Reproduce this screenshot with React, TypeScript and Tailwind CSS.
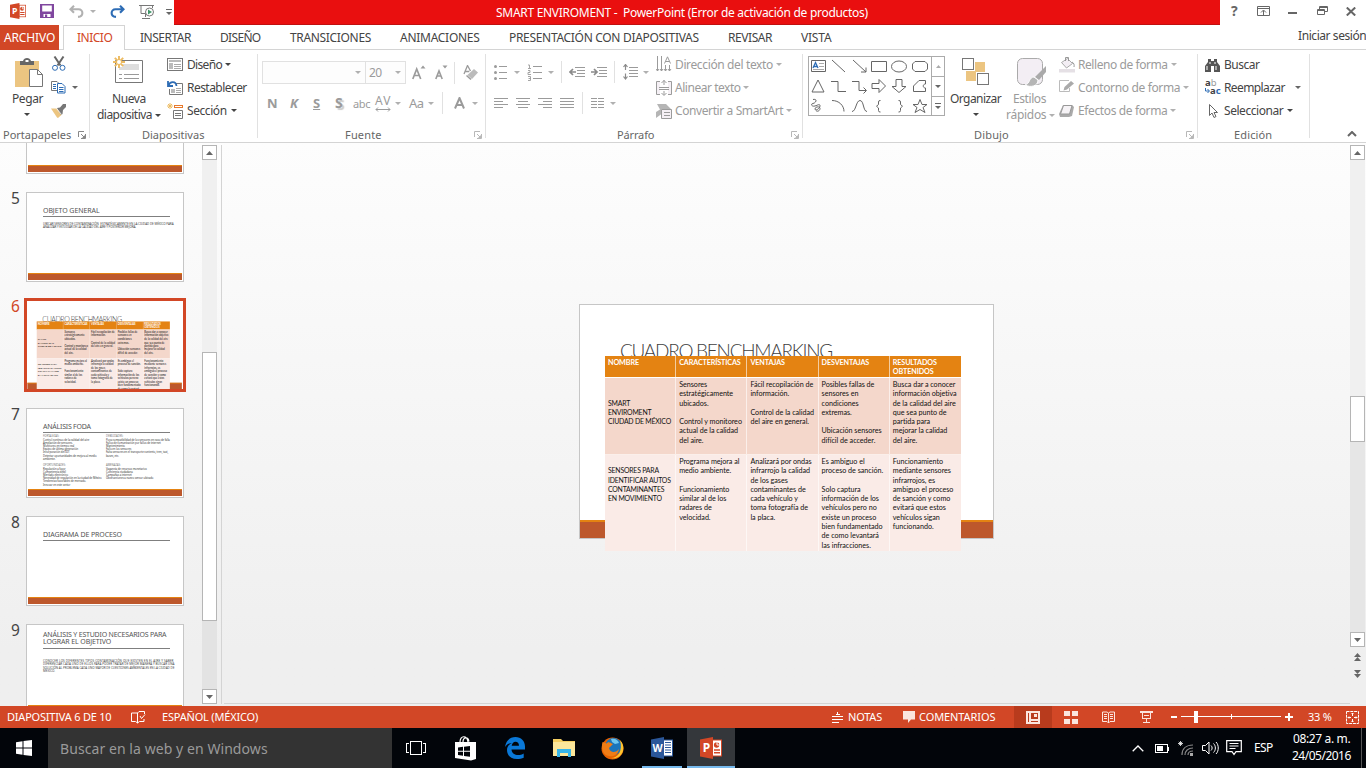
import React, { useLayoutEffect, useRef, useState } from "react";
import type { ReactNode } from "react";

/* Text whose letter spacing is worked out so that it fills the width of its box. */
function Fit({ className = "", children }: { className?: string; children: string }) {
  const box = useRef<HTMLSpanElement>(null);
  const inner = useRef<HTMLSpanElement>(null);
  const [gap, setGap] = useState(0);
  useLayoutEffect(() => {
    if (!box.current || !inner.current) return;
    const diff = box.current.offsetWidth - inner.current.offsetWidth;
    setGap(diff / Math.max(1, children.length));
  }, [children]);
  return (
    <span ref={box} className={`block shrink-0 whitespace-pre ${className}`}>
      <span ref={inner} className="inline-block" style={{ letterSpacing: `${gap}px` }}>
        {children}
      </span>
    </span>
  );
}

function Svg({ w = 16, h = 16, className = "", crisp = false, children }: { w?: number; h?: number; className?: string; crisp?: boolean; children: ReactNode }) {
  return (
    <svg width={w} height={h} viewBox={`0 0 ${w} ${h}`} fill="none" className={`block shrink-0 ${className}`} shapeRendering={crisp ? "crispEdges" : "auto"}>
      {children}
    </svg>
  );
}

function Caret({ className = "text-[#777]" }: { className?: string }) {
  return (
    <Svg w={6} h={3} className={className}>
      <path d="M0 0h6L3 3z" fill="currentColor" />
    </Svg>
  );
}

function Launcher({ className = "" }: { className?: string }) {
  return (
    <Svg w={8} h={8} className={className}>
      <path d="M.5 6V.5H6M3 3l3 3M7.500 3v4.500H3" stroke="currentColor" />
      <path d="M4 7h3V4z" fill="currentColor" />
    </Svg>
  );
}

const Sep = () => <div className="mt-[4px] h-[84px] w-px shrink-0 bg-[#e1e1e1]" />;
const SmallSep = ({ className = "" }: { className?: string }) => <div className={`h-[22px] w-px shrink-0 bg-[#e1e1e1] ${className}`} />;

function Logo({ size, letter, color, word }: { size: number; letter: string; color: string; word?: boolean }) {
  return (
    <svg width={size} height={size} viewBox="0 0 22 22" className="block shrink-0">
      <rect x="12.5" y="3" width="9" height="16" fill="#fff" stroke={color} />
      {word ? (
        <path d="M14 5.5h6M14 8h6M14 10.500h6M14 13h6M14 15.500h6" stroke={color} strokeWidth="1.2" />
      ) : (
        <>
          <circle cx="16.6" cy="8" r="2.7" fill={color} />
          <path d="M17 5v3h3" stroke="#fff" fill="none" />
          <path d="M14 13h6M14 15.800h6" stroke={color} strokeWidth="1.4" />
        </>
      )}
      <path d="M0 2.500L13 0v22L0 19.500z" fill={color} />
      <text x="6.5" y="15.2" textAnchor="middle" fontSize={word ? "10.5" : "12"} fontWeight="700" fontFamily="Noto Sans, sans-serif" fill="#fff">
        {letter}
      </text>
    </svg>
  );
}

/* ---------- title bar and tabs ---------- */

function TitleBar() {
  return (
    <div className="flex h-[25px] bg-white">
      <div className="flex w-[174px] shrink-0 items-center pb-[3px] pl-[10px]">
        <Logo size={16} letter="P" color="#d24726" />
        <Svg w={14} h={14} className="ml-[14px]">
          <path d="M0 0h14v14H0z" fill="#80479f" />
          <path d="M2.200 1.500h9.600v6H2.200zM3.500 10h7v3h-7z" fill="#fff" />
          <path d="M5 10.500h2.200V13H5z" fill="#80479f" />
        </Svg>
        <Svg w={15} h={13} className="ml-[15px]">
          <path d="M5 .8L1.500 4.300 5 7.800M2 4.300h7.500c5 0 5.500 7-.5 7.600" stroke="#b1b1b1" strokeWidth="2.1" />
        </Svg>
        <Caret className="ml-[6px] text-[#b1b1b1]" />
        <Svg w={15} h={13} className="ml-[14px]">
          <path d="M10 .8l3.500 3.500L10 7.800M13 4.300H5.500C.5 4.300 0 11.300 6 11.900" stroke="#2d6cb5" strokeWidth="2.1" />
        </Svg>
        <Svg w={16} h={16} className="ml-[14px] mt-[2px]">
          <path d="M0 1.500h15M2 2v7.500h5M6.500 10v3M3 14.500h8M13.500 2v2" stroke="#777" />
          <circle cx="10.5" cy="8" r="4" stroke="#777" fill="#fff" />
          <path d="M9 5.500v5l4-2.500z" fill="#3f9668" />
        </Svg>
        <Svg w={6} h={6} className="ml-[11px] mt-[2px]">
          <path d="M0 .5h6" stroke="#666" />
          <path d="M0 3h6L3 6z" fill="#666" />
        </Svg>
      </div>
      <div className="flex w-[1046px] shrink-0 items-center border-b border-[#c01010] bg-[#e90f0f] pl-[322px] pt-[2px] text-white">
        <Fit className="w-[372px] text-[12px]">{"SMART ENVIROMENT -  PowerPoint (Error de activación de productos)"}</Fit>
      </div>
      <div className="flex w-[146px] shrink-0 items-center pb-[3px] pl-[11px] text-[#666]">
        <span className="w-[8px] text-[14px] font-bold leading-none">?</span>
        <Svg w={13} h={10} className="ml-[18px]">
          <path d="M.5.5h12v9H.5zM1 2.500h11M6.500 9V4.500M4 6.500L6.500 4 9 6.500" stroke="#666" />
        </Svg>
        <Svg w={9} h={10} className="ml-[18px]" crisp>
          <path d="M0 6h9v2H0z" fill="#666" />
        </Svg>
        <Svg w={11} h={10} className="ml-[20px]">
          <path d="M2.500 3V.500h8v5H8M.5 3.500h7v5h-7zM.5 4.500h7M2.500 1.500h8" stroke="#666" />
        </Svg>
        <Svg w={10} h={9} className="ml-[18px]">
          <path d="M.8.5l8.400 8M9.200.5L.8 8.500" stroke="#666" strokeWidth="2" />
        </Svg>
      </div>
    </div>
  );
}

function Tabs() {
  return (
    <div className="flex h-[25px] items-stretch bg-white text-[12px] text-[#444]">
      <div className="flex w-[59px] shrink-0 items-center bg-[#d24726] pl-[4px] pt-px text-white">
        <Fit className="w-[51px]">ARCHIVO</Fit>
      </div>
      <div className="w-[4px] shrink-0 border-b border-[#d4d4d4]" />
      <div className="flex w-[62px] shrink-0 items-center border-x border-t border-[#d4d4d4] pl-[13px] text-[#d24726]">
        <Fit className="w-[35px]">INICIO</Fit>
      </div>
      <div className="flex grow items-center border-b border-[#d4d4d4] pl-[15px] pt-[2px]">
        <Fit className="w-[51px]">INSERTAR</Fit>
        <Fit className="ml-[29px] w-[41px]">DISEÑO</Fit>
        <Fit className="ml-[29px] w-[81px]">TRANSICIONES</Fit>
        <Fit className="ml-[29px] w-[80px]">ANIMACIONES</Fit>
        <Fit className="ml-[29px] w-[190px]">PRESENTACIÓN CON DIAPOSITIVAS</Fit>
        <Fit className="ml-[29px] w-[44px]">REVISAR</Fit>
        <Fit className="ml-[29px] w-[30px]">VISTA</Fit>
        <Fit className="mb-[5px] ml-[467px] w-[68px]">Iniciar sesión</Fit>
      </div>
    </div>
  );
}

/* ---------- ribbon ---------- */

function Group({ width, label, launcher, children }: { width: string; label: ReactNode; launcher?: ReactNode; children: ReactNode }) {
  return (
    <div className={`flex shrink-0 flex-col ${width}`}>
      <div className="flex h-[76px] shrink-0">{children}</div>
      <div className="flex h-[16px] shrink-0 items-center pt-[1px] text-[11px] leading-[15px] text-[#666]">
        {label}
        {launcher}
      </div>
    </div>
  );
}

function Clipboard() {
  return (
    <Group width="w-[89px]" label={<Fit className="ml-[3px] w-[68px]">Portapapeles</Fit>} launcher={<Launcher className="ml-[7px] text-[#888]" />}>
      <div className="flex w-[50px] shrink-0 flex-col pl-[12px] text-[12px] text-[#444]">
        <Svg w={30} h={30} className="ml-[3px] mt-[8px]">
          <path d="M0 3h24v26H0z" fill="#ecc581" />
          <path d="M5 3h3c1-4 7-4 8 0h3v4H5z" fill="#666" />
          <path d="M10.500 2h3v2h-3z" fill="#fff" />
          <path d="M14.500 11.500h8l5 5v12h-13z" fill="#fff" stroke="#777" />
          <path d="M22.500 11.500v5h5" stroke="#777" />
        </Svg>
        <Fit className="mt-[2px] w-[31px]">Pegar</Fit>
        <Caret className="ml-[12px] mt-[5px]" />
      </div>
      <div className="flex flex-col pt-[6px]">
        <Svg w={16} h={16} className="ml-[1px]">
          <path d="M3.500.5l6 9M12.500.5l-6 9" stroke="#666" strokeWidth="2" />
          <circle cx="4" cy="11.8" r="2.5" stroke="#2d6cb5" />
          <circle cx="11.5" cy="11.8" r="2.5" stroke="#2d6cb5" />
        </Svg>
        <div className="mt-[7px] flex items-center">
          <Svg className="ml-[1px]">
            <path d="M.5 2.500h5.500l2 2v7H.5z" fill="#fff" stroke="#777" />
            <path d="M6.500 4.500H11l3 3v6.500H6.500z" fill="#fff" stroke="#2d6cb5" />
            <path d="M2 5.500h3M2 7.500h3M2 9.500h3M8 8.500h4.500M8 10.500h4.500M8 12.500h4.500" stroke="#2d6cb5" />
          </Svg>
          <Caret className="ml-[5px] text-[#666]" />
        </div>
        <Svg className="ml-[1px] mt-[8px]">
          <path d="M0 5.500l6 0 5 6-4 3.500-1-.5z" fill="#ecc581" />
          <path d="M6 5l3-.5 3-3.500h3v3l-3 3-.5 4-1.500 1z" fill="#777" />
          <path d="M5.500 5.500l5 6" stroke="#fff" strokeWidth=".8" />
        </Svg>
      </div>
    </Group>
  );
}

function Slides() {
  return (
    <Group width="w-[167px]" label={<Fit className="ml-[52px] w-[62px]">Diapositivas</Fit>}>
      <div className="w-[76px] shrink-0 pl-[7px] text-[12px] text-[#444]">
        <Svg w={31} h={29} className="ml-[16px] mt-[6px]">
          <path d="M2.500 4.500h27v22h-27z" fill="#fff" stroke="#777" />
          <path d="M10 8h16v6H6v-3h4z" fill="#ddd" />
          <path d="M6 18.500h3M11 18.500h15M6 22.500h3M11 22.500h15" stroke="#999" />
          <path d="M6 0v12M0 6h12M1.800 1.800l8.400 8.400M10.200 1.800l-8.400 8.400" stroke="#ecbb62" strokeWidth="1.9" />
          <circle cx="6" cy="6" r="2" fill="#fff" />
        </Svg>
        <Fit className="ml-[15px] mt-[5px] w-[34px]">Nueva</Fit>
        <div className="-mt-[2px] flex items-center">
          <Fit className="w-[55px]">diapositiva</Fit>
          <Caret className="ml-[3px] mt-[1px]" />
        </div>
      </div>
      <div className="flex flex-col pt-[3px] text-[12px] text-[#444]">
        <div className="flex h-[23px] items-center">
          <Svg className="ml-[1px]" crisp>
            <path d="M.5 1.500h15v12H.5z" stroke="#777" />
            <path d="M2 3h12v2H2zM2 6h4v6H2z" fill="#bbb" />
            <path d="M7 7.500h7M7 9.500h7M7 11.500h7" stroke="#aaa" />
          </Svg>
          <Fit className="ml-[4px] w-[35px]">Diseño</Fit>
          <Caret className="ml-[3px]" />
        </div>
        <div className="flex h-[23px] items-center">
          <Svg className="ml-[1px]">
            <path d="M9 3.500h6.500v11H2.500V9" stroke="#777" />
            <path d="M4 9h4v4H4z" fill="#bbb" />
            <path d="M9 8.500h5M9 10.500h5M9 12.500h5" stroke="#aaa" />
            <path d="M1 1v5h5M1.500 5.500C3 1 9 1 9.500 6" stroke="#2d6cb5" strokeWidth="1.8" />
          </Svg>
          <Fit className="ml-[4px] w-[60px]">Restablecer</Fit>
        </div>
        <div className="flex h-[23px] items-center">
          <Svg className="ml-[1px]">
            <path d="M3 0v6M0 3h6M1 1l4 4M5 1L1 5" stroke="#ecbb62" />
            <path d="M7 2h9v3H7z" fill="#e8792b" />
            <path d="M8 3h7v1H8z" fill="#fff" />
            <path d="M6.500 7.500h9v8h-9zM8 10.500h6M8 12.500h6" stroke="#777" />
          </Svg>
          <Fit className="ml-[4px] w-[40px]">Sección</Fit>
          <Caret className="ml-[4px]" />
        </div>
      </div>
    </Group>
  );
}

function FontGroup() {
  return (
    <Group width="w-[227px]" label={<Fit className="ml-[87px] w-[37px]">Fuente</Fit>} launcher={<Launcher className="ml-[92px] text-[#b8b8b8]" />}>
      <div className="flex flex-col text-[#9b9b9b]">
        <div className="mt-[11px] flex h-[23px] items-center">
          <div className="ml-[4px] flex h-[23px] w-[104px] items-center justify-end border border-[#e1e1e1] bg-[#fdfdfd] pr-[4px]">
            <Caret className="text-[#b0b0b0]" />
          </div>
          <div className="-ml-px flex h-[23px] w-[41px] items-center border border-[#e1e1e1] bg-[#fdfdfd] pl-[3px] text-[12px]">
            <Fit className="w-[13px]">20</Fit>
            <Caret className="ml-[13px] text-[#b0b0b0]" />
          </div>
          <Svg w={14} h={15} className="ml-[6px]">
            <path d="M.8 14L4.700 4l4 10M2.300 10.500h5" stroke="#9b9b9b" strokeWidth="1.7" />
            <path d="M8.500 3.500h5L11 .5z" fill="#9b9b9b" />
          </Svg>
          <Svg w={13} h={15} className="ml-[9px]">
            <path d="M.8 14l3.200-8 3.200 8M2 11h4.200" stroke="#9b9b9b" strokeWidth="1.6" />
            <path d="M7.500.5h5l-2.500 3z" fill="#9b9b9b" />
          </Svg>
          <SmallSep className="ml-[6px]" />
          <Svg className="ml-[8px]">
            <path d="M1 9L4.500.500 7.500 6M2.300 6.500h4" stroke="#9b9b9b" strokeWidth="1.3" />
            <path d="M11 4l4 3.500-6 6.500-4.500-4z" fill="#bbb" />
            <path d="M3.500 10.500l4.500 4" stroke="#9b9b9b" strokeWidth="1.5" />
          </Svg>
        </div>
        <div className="mt-[8px] flex h-[22px] items-center text-[14px] leading-none">
          <span className="ml-[9px] w-[11px] text-[13px] font-bold">N</span>
          <span className="ml-[12px] w-[9px] text-[13px] font-bold italic">K</span>
          <span className="ml-[14px] w-[9px] text-[13px] font-bold underline">S</span>
          <span className="ml-[13px] w-[11px] text-[14px] font-bold [text-shadow:2px_2px_1px_#ccc]">S</span>
          <Fit className="ml-[7px] w-[17px] text-[11px] line-through">abc</Fit>
          <div className="ml-[5px] flex w-[18px] shrink-0 flex-col">
            <Fit className="w-[16px] text-[12px]">AV</Fit>
            <Svg w={17} h={5}>
              <path d="M1 2.500h14M3 .5l-2 2 2 2M13 .5l2 2-2 2" stroke="#9b9b9b" />
            </Svg>
          </div>
          <Caret className="ml-[2px] text-[#b0b0b0]" />
          <Fit className="ml-[8px] w-[15px] text-[13px]">Aa</Fit>
          <Caret className="ml-[4px] text-[#b0b0b0]" />
          <SmallSep className="ml-[8px]" />
          <Svg w={11} h={12} className="ml-[11px]">
            <path d="M1 11.500L5.500 1 10 11.500M2.800 8h5.500" stroke="#9b9b9b" strokeWidth="2" />
          </Svg>
          <Caret className="ml-[7px] text-[#b0b0b0]" />
        </div>
      </div>
    </Group>
  );
}

function AlignIcon({ d, className }: { d: string; className: string }) {
  return (
    <Svg w={14} h={12} crisp className={className}>
      <path d={d} stroke="#9b9b9b" />
    </Svg>
  );
}

function Paragraph() {
  const light = "text-[#b0b0b0]";
  return (
    <Group width="w-[316px]" label={<Fit className="ml-[131px] w-[37px]">Párrafo</Fit>} launcher={<Launcher className="ml-[137px] text-[#b8b8b8]" />}>
      <div className="w-[170px] shrink-0 pl-[8px]">
        <div className="mt-[11px] flex h-[22px] items-center">
          <Svg w={14} h={16}>
            <path d="M5 2.500h8M5 8.500h8M5 14.500h8" stroke="#9b9b9b" />
            <circle cx="1.5" cy="2.5" r="1.5" fill="#9b9b9b" />
            <circle cx="1.5" cy="8.5" r="1.5" fill="#9b9b9b" />
            <circle cx="1.5" cy="14.5" r="1.5" fill="#9b9b9b" />
          </Svg>
          <Caret className={`ml-[6px] ${light}`} />
          <Svg w={15} h={17} className="ml-[7px]">
            <path d="M6 2.500h9M6 8.500h9M6 14.500h9" stroke="#9b9b9b" />
            <path d="M1 1h1.500v3M1 4.500h3M1 6.500h2v2H1v2h3M1 12.500h2.500v4H1M1.500 14.500h2" stroke="#9b9b9b" strokeWidth=".9" />
          </Svg>
          <Caret className={`ml-[6px] ${light}`} />
          <SmallSep className="ml-[7px]" />
          <Svg w={16} h={13} className="ml-[7px]">
            <path d="M6 1.500h10M8 4.500h8M8 7.500h8M6 10.500h10" stroke="#9b9b9b" />
            <path d="M7 6H1M4 3L1 6l3 3" stroke="#8b8b8b" strokeWidth="1.7" />
          </Svg>
          <Svg w={16} h={13} className="ml-[6px]">
            <path d="M6 1.500h10M8 4.500h8M8 7.500h8M6 10.500h10" stroke="#9b9b9b" />
            <path d="M0 6h6M3 3l3 3-3 3" stroke="#8b8b8b" strokeWidth="1.7" />
          </Svg>
          <SmallSep className="ml-[7px]" />
          <Svg w={15} h={16} className="ml-[8px]">
            <path d="M6 3.500h9M6 6.500h9M6 9.500h9M6 12.500h9" stroke="#9b9b9b" />
            <path d="M2.500 1v5M.5 3l2-2.500 2 2.500M2.500 9.500v5.500M.5 12.500l2 2.500 2-2.500" stroke="#8b8b8b" strokeWidth="1.2" />
          </Svg>
          <Caret className={`ml-[5px] ${light}`} />
        </div>
        <div className="mt-[9px] flex h-[22px] items-center">
          <AlignIcon className="" d="M0 1.500h14M0 4.500h9M0 7.500h14M0 10.500h9" />
          <AlignIcon className="ml-[8px]" d="M0 1.500h14M2 4.500h10M0 7.500h14M2 10.500h10" />
          <AlignIcon className="ml-[8px]" d="M0 1.500h14M5 4.500h9M0 7.500h14M5 10.500h9" />
          <AlignIcon className="ml-[8px]" d="M0 1.500h14M0 4.500h14M0 7.500h14M0 10.500h14" />
          <SmallSep className="ml-[8px]" />
          <AlignIcon className="ml-[8px]" d="M0 1.500h6M0 4.500h6M0 7.500h6M0 10.500h6M7 1.500h6M7 4.500h6M7 7.500h6M7 10.500h6" />
          <Caret className={`ml-[5px] ${light}`} />
        </div>
      </div>
      <div className="flex flex-col pt-[3px] text-[12px] text-[#9b9b9b]">
        <div className="flex h-[23px] items-center">
          <Svg w={16} h={17}>
            <path d="M1.500 0v15M5.500 0v15M9.500 9v6M13.500 9v6M0 13l1.500 2L3 13M4 13l1.500 2L7 13M8 13l1.500 2 1.500-2M12 13l1.500 2 1.500-2M8.500 7.500L11.500.8l3 6.700M9.500 5.500h4" stroke="#9b9b9b" />
          </Svg>
          <Fit className="ml-[3px] w-[98px]">Dirección del texto</Fit>
          <Caret className={`ml-[3px] ${light}`} />
        </div>
        <div className="flex h-[23px] items-center">
          <Svg>
            <path d="M4 1.500H.5v13H4M12 1.500h3.500v13H12" fill="#f5f0f5" stroke="#9b9b9b" />
            <path d="M3 7.500h10M3 9.500h10M8 0v5M5.500 3L8 .5 10.500 3M8 11v4M5.500 13L8 15.500l2.500-2.500" stroke="#9b9b9b" />
          </Svg>
          <Fit className="ml-[3px] w-[66px]">Alinear texto</Fit>
          <Caret className={`ml-[2px] ${light}`} />
        </div>
        <div className="flex h-[23px] items-center">
          <Svg>
            <path d="M1 1h9l5 5H5.500v5L0 15V9l4-2.500z" fill="#b5b5b5" />
            <path d="M5.500 6.500h10v9h-10z" fill="#f5f0f5" stroke="#9b9b9b" />
            <path d="M8 9.500h6M8 12.500h6" stroke="#9b9b9b" />
          </Svg>
          <Fit className="ml-[3px] w-[108px]">Convertir a SmartArt</Fit>
          <Caret className={`ml-[3px] ${light}`} />
        </div>
      </div>
    </Group>
  );
}

const SHAPES: string[] = [
  "",
  "M3 3l13 12",
  "M3 3l13 12M16 10.500V15h-5",
  "M1.500 4.500h15v10h-15z",
  "M1.500 9.500a7.500 5.500 0 1 0 15 0a7.500 5.500 0 1 0-15 0",
  "M4 4.500h10l2.500 2.500v5L14 14.500H4L1.500 12V7z",
  "M9 4l6 12H3z",
  "M2 5.500h7v10h8",
  "M2 5.500h7v9H16M13.500 11.500l3 3-3 3",
  "M2 7.500h7V3.500l6.500 6.500-6.500 6.500v-4H2z",
  "M6 3.500h6v7h4L9 16.500 2 10.500h4z",
  "M8 4.500L2.500 10v5.500h12V12c-3 0-3-4 0-4V4.500z",
  "M4 3.500c5-1 3 3.500 0 4s-1 3.500 2 2.500 5-2.500 5 0-5 5.500-5 3 5-3 5-.5-3 3.500-4 2",
  "M3 4.500c7 0 12 5 12 11",
  "M2 15.500c4 0 4-11 8-11s3 11 7 11",
  "M10.500 4.500H10Q8.500 4.500 8.500 6V8.500L6.500 10.200L8.500 12V14.500Q8.500 16 10 16H10.500",
  "M8.500 4.500H9Q10.500 4.500 10.500 6V8.500L12.500 10.200L10.500 12V14.500Q10.500 16 9 16H8.500",
  "M9 3.500l2 5h5l-4 3 2 5-5-3-5 3 2-5-4-3h5z",
];

function Drawing() {
  const light = "text-[#b0b0b0]";
  return (
    <Group width="w-[394px]" label={<Fit className="ml-[171px] w-[35px]">Dibujo</Fit>} launcher={<Launcher className="ml-[177px] text-[#b8b8b8]" />}>
      <div className="ml-[5px] mt-[6px] flex h-[60px] w-[137px] shrink-0 border border-[#ababab] bg-white">
        <div className="grid h-[58px] w-[122px] shrink-0 grid-cols-6 content-start">
          {SHAPES.map((d, i) => (
            <Svg key={i} w={20} h={20} className="-mt-[0.3px]">
              {i === 0 ? (
                <>
                  <path d="M2.500 3.500h14v11h-14z" stroke="#666" />
                  <path d="M4 11L6.500 5.500 9 11M5 9.500h3" stroke="#2d6cb5" strokeWidth="1.3" />
                  <path d="M10 6.500h5M10 9.500h5M4 12.500h11" stroke="#aaa" />
                </>
              ) : (
                <path d={d} stroke="#666" />
              )}
            </Svg>
          ))}
        </div>
        <div className="flex w-[14px] flex-col border-l border-[#ababab]">
          <div className="flex h-[20px] items-center justify-center border-b border-[#ababab]">
            <Svg w={5} h={3}>
              <path d="M0 3h5L2.500 0z" fill="#ababab" />
            </Svg>
          </div>
          <div className="flex h-[20px] items-center justify-center border-b border-[#ababab]">
            <Caret className="text-[#666]" />
          </div>
          <div className="flex h-[18px] items-center justify-center">
            <Svg w={6} h={6}>
              <path d="M0 .5h6" stroke="#666" />
              <path d="M0 3h6L3 6z" fill="#666" />
            </Svg>
          </div>
        </div>
      </div>
      <div className="ml-[5px] w-[54px] shrink-0 text-[12px] text-[#444]">
        <Svg w={28} h={28} className="ml-[12px] mt-[8px]" crisp>
          <path d="M13 4h10v10H13zM4 13h10v10H4z" fill="#ecc581" />
          <path d="M.5.500h11v11H.500zM15.500 15.500h11v11h-11z" fill="#fff" stroke="#777" />
        </Svg>
        <Fit className="mt-[4px] w-[51px]">Organizar</Fit>
        <Caret className="ml-[23px] mt-[5px]" />
      </div>
      <div className="ml-[2px] w-[53px] shrink-0 text-[12px] text-[#9b9b9b]">
        <Svg w={31} h={30} className="ml-[11px] mt-[8px]">
          <rect x=".5" y=".5" width="25" height="26" rx="5" fill="#f3eef4" stroke="#aaa" />
          <path d="M29 8v6l-7 8-4-3z" fill="#aaa" />
          <path d="M17 19c-5 0-4 7-9 8 6 3 13 1 13-5z" fill="#b5b5b5" stroke="#fff" />
        </Svg>
        <Fit className="ml-[7px] mt-[2px] w-[33px]">Estilos</Fit>
        <div className="-mt-[2px] flex items-center">
          <Fit className="w-[40px]">rápidos</Fit>
          <Caret className={`ml-[3px] mt-[1px] ${light}`} />
        </div>
      </div>
      <div className="flex flex-col pt-[3px] text-[12px] text-[#9b9b9b]">
        <div className="flex h-[23px] items-center">
          <Svg w={17} h={17}>
            <path d="M2.500 6.500l6-4 5 5-6 4.500z" fill="#f3eef4" stroke="#aaa" />
            <path d="M6.500 5V1.500h3V5M13 6c2 1 2.500 3 2 5" stroke="#999" />
            <path d="M0 13h16v3.500H0z" fill="#e5e0e5" />
          </Svg>
          <Fit className="ml-[2px] w-[90px]">Relleno de forma</Fit>
          <Caret className={`ml-[3px] ${light}`} />
        </div>
        <div className="flex h-[23px] items-center">
          <Svg w={17}>
            <path d="M10 .5H.5v11h10V8" stroke="#bbb" />
            <path d="M12 1l3 2.500-7 6-3.500 1L5.500 7z" fill="#aaa" />
          </Svg>
          <Fit className="ml-[2px] w-[102px]">Contorno de forma</Fit>
          <Caret className={`ml-[3px] ${light}`} />
        </div>
        <div className="flex h-[23px] items-center">
          <Svg w={17}>
            <path d="M4 2h9l2 2-2 9-3 1H1l-1-3z" fill="#aaa" />
            <path d="M4.500 2.500h8.500l-2.500 8.500H1.500z" fill="#f6f3f6" stroke="#999" />
          </Svg>
          <Fit className="ml-[2px] w-[89px]">Efectos de forma</Fit>
          <Caret className={`ml-[3px] ${light}`} />
        </div>
      </div>
    </Group>
  );
}

function Editing() {
  return (
    <Group width="w-[111px]" label={<Fit className="ml-[36px] w-[38px]">Edición</Fit>}>
      <div className="flex flex-col pl-[7px] pt-[3px] text-[12px] text-[#444]">
        <div className="flex h-[23px] items-center">
          <Svg w={15} h={14}>
            <path d="M3 1h3v2h3V1h3v3l3 4v6H9V8H6v6H0V8l3-4z" fill="#555" />
            <path d="M2 8v4M11 8v4M5 4v2M10 4v2" stroke="#fff" />
          </Svg>
          <Fit className="ml-[4px] w-[35px]">Buscar</Fit>
        </div>
        <div className="flex h-[23px] items-center">
          <div className="flex w-[16px] shrink-0 flex-col text-[9.5px] font-bold leading-[8px]">
            <div className="flex">
              <span>a</span>
              <span className="font-normal text-[#999]">b</span>
            </div>
            <div className="flex items-center pb-[2px]">
              <Svg w={5} h={5}>
                <path d="M.5 0v3H4M2.500 1L4.500 3l-2 2" stroke="#2d6cb5" />
              </Svg>
              <span>a</span>
              <span className="text-[#2d6cb5]">c</span>
            </div>
          </div>
          <Fit className="ml-[3px] w-[61px]">Reemplazar</Fit>
          <Caret className="ml-[10px] text-[#666]" />
        </div>
        <div className="flex h-[23px] items-center">
          <Svg w={16} h={16}>
            <path d="M4.500 1.500v11L7 10l2 4.500 2-1L9 9.500h3.500z" fill="#fff" stroke="#666" />
          </Svg>
          <Fit className="ml-[3px] w-[59px]">Seleccionar</Fit>
          <Caret className="ml-[4px]" />
        </div>
      </div>
    </Group>
  );
}

function Ribbon() {
  return (
    <div className="flex h-[93px] border-b border-[#d4d4d4] bg-white">
      <Clipboard />
      <Sep />
      <Slides />
      <Sep />
      <FontGroup />
      <Sep />
      <Paragraph />
      <Sep />
      <Drawing />
      <Sep />
      <Editing />
      <Sep />
      <Svg w={10} h={6} className="ml-[37px] mt-[81px]">
        <path d="M1 5l4-4 4 4" stroke="#666" strokeWidth="2" />
      </Svg>
    </div>
  );
}

/* ---------- slides ---------- */

const HEAD = [["NOMBRE"], ["CARACTERÍSTICAS"], ["VENTAJAS"], ["DESVENTAJAS"], ["RESULTADOS", "OBTENIDOS"]];
const ROWS = [
  [
    ["", "", "SMART", "ENVIROMENT", "CIUDAD DE MÉXICO"],
    ["Sensores", "estratégicamente", "ubicados.", "", "Control y monitoreo", "actual de la calidad", "del aire."],
    ["Fácil recopilación de", "información.", "", "Control de la calidad", "del aire en general."],
    ["Posibles fallas de", "sensores en", "condiciones", "extremas.", "", "Ubicación sensores", "difícil de acceder."],
    ["Busca dar a conocer", "información objetiva", "de la calidad del aire", "que sea punto de", "partida para", "mejorar la calidad", "del aire."],
  ],
  [
    ["", "SENSORES PARA", "IDENTIFICAR AUTOS", "CONTAMINANTES", "EN MOVIMIENTO"],
    ["Programa mejora al", "medio ambiente.", "", "Funcionamiento", "similar al de los", "radares de", "velocidad."],
    ["Analizará por ondas", "infrarrojo la calidad", "de los gases", "contaminantes de", "cada vehículo y", "toma fotografía de", "la placa."],
    ["Es ambiguo el", "proceso de sanción.", "", "Solo captura", "información de los", "vehículos pero no", "existe un proceso", "bien fundamentado", "de como levantará", "las infracciones."],
    ["Funcionamiento", "mediante sensores", "infrarrojos, es", "ambiguo el proceso", "de sanción y como", "evitará que estos", "vehículos sigan", "funcionando."],
  ],
];

function Cell({ lines, className = "" }: { lines: string[]; className?: string }) {
  return (
    <div className={`border-r border-white/60 pl-[3px] pt-[2px] last:border-r-0 ${className}`}>
      {lines.map((l, i) => (
        <div key={i} className="h-[9.3px] whitespace-nowrap">
          {l}
        </div>
      ))}
    </div>
  );
}

const UPPER = "pt-[2.7px] text-[6.9px] tracking-[-0.2px]";

function BenchmarkSlide() {
  return (
    <div className="relative flex h-[235px] w-[415px] flex-col justify-between font-['Lato',sans-serif]">
      <Fit className="ml-[41px] mt-[33px] w-[212px] text-[19px] font-light leading-[27px] text-[#404040]">CUADRO BENCHMARKING</Fit>
      <div className="mx-px mb-px h-[18px] border-t-2 border-[#e48312] bg-[#bd582c]" />
      <div className="absolute left-[26px] top-[52px] w-[356px] text-[7.2px] leading-[9.3px] tracking-[-0.03px] text-[#111]">
        <div className="grid h-[22px] grid-cols-5 border-b border-white bg-[#e48312] font-bold text-white">
          {HEAD.map((c, i) => (
            <Cell key={i} lines={c} className="tracking-[-0.12px]" />
          ))}
        </div>
        <div className="grid h-[77px] grid-cols-5 border-b border-white/60 bg-[#f4d7cb]">
          {ROWS[0].map((c, i) => (
            <Cell key={i} lines={c} className={i === 0 ? UPPER : ""} />
          ))}
        </div>
        <div className="grid h-[96px] grid-cols-5 bg-[#faebe7]">
          {ROWS[1].map((c, i) => (
            <Cell key={i} lines={c} className={i === 0 ? UPPER : ""} />
          ))}
        </div>
      </div>
    </div>
  );
}

function Thumb({ n, selected, className = "", footer = true, children }: { n: string; selected?: boolean; className?: string; footer?: boolean; children?: ReactNode }) {
  return (
    <div className={`mb-[18px] flex h-[90px] shrink-0 ${className}`}>
      <span className={`-mt-[4px] w-[26px] shrink-0 pl-[11px] text-[15.5px] leading-[20px] ${selected ? "text-[#d24726]" : "text-[#444]"}`}>{n}</span>
      <div
        className={`flex h-[90px] w-[158px] flex-col justify-between overflow-hidden border bg-white ${
          selected ? "border-[#d24726] outline-2 outline-[#d24726]" : "border-[#c6c6c6]"
        }`}
      >
        <div className="min-h-0">{children}</div>
        {footer && <div className="mx-px mb-px h-[7px] shrink-0 border-t border-[#e48312] bg-[#bd582c]" />}
      </div>
    </div>
  );
}

const Rule = ({ className = "" }: { className?: string }) => <div className={`ml-[16px] h-px w-[127px] bg-[#7f7f7f] ${className}`} />;

const SWOT: string[][][] = [
  [
    ["FORTALEZAS:", "Control continuo de la calidad del aire", "Ampliación de sensores.", "Monitoreo en tiempo real", "Equipo de última generación", "Incorporación del IOT", "Detectar oportunidades de mejora al medio", "ambiente."],
    ["DEBILIDADES:", "Poca compatibilidad de los sensores en caso de falla", "Fallos de comunicación por fallos de internet", "Mantenimiento", "Fallo en los sensores", "Falta sensores en el transporte contento, tren, taxi,", "buses, etc."],
  ],
  [
    ["OPORTUNIDADES:", "Regulación a favor", "Competencia débil", "Mercado electrónico", "Necesidad de regulación en la ciudad de México", "Tendencias favorables de mercado.", "Innovar en este sector"],
    ["AMENAZAS:", "Vagancia de recursos monetarios", "Conciencia ciudadana", "Campañas a internet", "Obstrucciones a nuevo sensor ubicado"],
  ],
];

function ThumbPanel() {
  return (
    <div className="flex w-[202px] shrink-0 flex-col overflow-hidden font-['Noto_Sans',sans-serif]">
      <Thumb n="" className="-mt-[59px]" />
      <Thumb n="5">
        <Fit className="ml-[16px] mt-[12px] w-[57px] text-[7px] leading-[11px] text-[#555]">OBJETO GENERAL</Fit>
        <Rule />
        <div className="ml-[16px] mt-[6px] text-[3px] leading-[3px] text-[#444]">
          <Fit className="w-[131px]">UBICAR SENSORES DE CONTAMINACIÓN  ESTRATÉGICAMENTE EN LA CIUDAD DE MÉXICO PARA</Fit>
          <Fit className="w-[93px]">ANALIZAR Y ESTUDIAR DE LA CALIDAD DEL AIRE Y POSTERIOR MEJORA.</Fit>
        </div>
      </Thumb>
      <Thumb n="6" selected footer={false}>
        <div className="h-[88px] w-[156px] overflow-hidden pt-px">
          <div className="h-[235px] w-[415px] origin-top-left scale-[0.374]">
            <BenchmarkSlide />
          </div>
        </div>
      </Thumb>
      <Thumb n="7">
        <Fit className="ml-[16px] mt-[12px] w-[48px] text-[7px] leading-[11px] text-[#555]">ANÁLISIS FODA</Fit>
        <Rule />
        <div className="ml-[16px] mt-[2px] text-[2.7px] leading-[3.1px] tracking-[-0.04px] text-[#333]">
          {SWOT.map((pair, r) => (
            <div key={r} className="flex h-[29px] whitespace-nowrap">
              {pair.map((lines, c) => (
                <div key={c} className="w-[63px] shrink-0">
                  {lines.map((l, i) => (
                    <div key={i} className={i === 0 ? "mb-[1px] text-[#777]" : ""}>
                      {l}
                    </div>
                  ))}
                </div>
              ))}
            </div>
          ))}
        </div>
      </Thumb>
      <Thumb n="8">
        <Fit className="ml-[16px] mt-[12px] w-[79px] text-[7px] leading-[11px] text-[#555]">DIAGRAMA DE PROCESO</Fit>
        <Rule />
      </Thumb>
      <Thumb n="9">
        <div className="ml-[16px] mt-[7px] text-[7px] leading-[6.5px] text-[#555]">
          <Fit className="w-[123px]">ANÁLISIS Y ESTUDIO NECESARIOS PARA</Fit>
          <Fit className="w-[68px]">LOGRAR EL OBJETIVO</Fit>
        </div>
        <Rule className="mt-[3px]" />
        <div className="ml-[16px] mt-[11px] text-[3px] leading-[3.3px] text-[#444]">
          <Fit className="w-[131px]">CONOCER LOS DIFERENTES TIPOS CONTAMINACIÓN QUE EXISTEN EN EL AIRE Y SABER</Fit>
          <Fit className="w-[131px]">DIFERENCIAR CADA UNO DE ELLOS PARA PODER TRATAR DE MEJOR MANERA Y BUSCAR UNA</Fit>
          <Fit className="w-[131px]">SOLUCIÓN AL PROBLEMA CADA UNO MAYOR DE CUESTIONES AMBIENTALES EN LA CIUDAD DE</Fit>
          <Fit className="w-[12px]">MÉXICO.</Fit>
        </div>
      </Thumb>
    </div>
  );
}

function ScrollButton({ down }: { down?: boolean }) {
  return (
    <div className="flex h-[15px] w-[15px] shrink-0 items-center justify-center border border-[#b5b5b5] bg-white">
      <Svg w={7} h={4}>
        <path d={down ? "M0 0h7L3.500 4z" : "M0 4h7L3.500 0z"} fill="#666" />
      </Svg>
    </div>
  );
}

function Workspace() {
  return (
    <div className="flex h-[563px] bg-linear-to-b from-[#fdfdfd] to-[#efefef] to-90%">
      <ThumbPanel />
      <div className="flex w-[15px] shrink-0 flex-col pt-[2px]">
        <ScrollButton />
        <div className="h-[192px] bg-[#f0f0f0]" />
        <div className="h-[269px] border border-[#b5b5b5] bg-white" />
        <div className="h-[68px] bg-[#e3e3e3]" />
        <ScrollButton down />
      </div>
      <div className="ml-[4px] mt-[2px] h-[559px] w-px bg-[#d4d4d4]" />
      <div className="mb-[2px] ml-[2px] flex w-[1126px] shrink-0 flex-col border-b border-[#d4d4d4] pl-[355px] pt-[161px]">
        <div className="h-[235px] w-[415px] bg-white outline-1 -outline-offset-1 outline-[#c6c6c6]">
          <BenchmarkSlide />
        </div>
      </div>
      <div className="flex w-[16px] shrink-0 flex-col pt-[2px]">
        <ScrollButton />
        <div className="h-[236px] w-[15px] bg-[#f0f0f0]" />
        <div className="h-[46px] w-[15px] border border-[#b5b5b5] bg-white" />
        <div className="h-[190px] w-[15px] bg-[#e6e6e6]" />
        <ScrollButton down />
        <Svg w={7} h={8} className="ml-[4px] mt-[6px]">
          <path d="M0 4h7L3.500 0zM0 8h7L3.500 4z" fill="#666" />
        </Svg>
        <Svg w={7} h={8} className="ml-[4px] mt-[9px]">
          <path d="M0 0h7L3.500 4zM0 4h7L3.500 8z" fill="#666" />
        </Svg>
      </div>
    </div>
  );
}

/* ---------- status bar ---------- */

function StatusBar() {
  return (
    <div className="flex h-[22px] items-center bg-[#d24726] text-[11px] text-white">
      <Fit className="ml-[7px] w-[104px]">DIAPOSITIVA 6 DE 10</Fit>
      <Svg w={15} h={13} className="ml-[20px]">
        <path d="M6.500 2H.5v8.500h4l2 1.500 2-1.500H13V8M6.500 2v10M6.500 2l1.500-1.500h5.500V3M9 5l1.500 2.500L14 3.500" stroke="#fff" />
      </Svg>
      <Fit className="ml-[16px] w-[96px]">ESPAÑOL (MÉXICO)</Fit>
      <Svg w={12} h={12} className="ml-[574px]" crisp>
        <path d="M0 5.500h11M0 8.500h11M0 11.500h7M5.500 4V1M3.500 3.500h4" stroke="#fff" />
      </Svg>
      <Fit className="ml-[4px] w-[34px]">NOTAS</Fit>
      <Svg w={12} h={12} className="ml-[21px]">
        <path d="M0 0h12v8.500H8L5 12V8.500H0z" fill="#fbe5de" />
      </Svg>
      <Fit className="ml-[4px] w-[76px]">COMENTARIOS</Fit>
      <div className="ml-[19px] flex h-[22px] w-[38px] shrink-0 items-center justify-center bg-[#b83b1d]">
        <Svg w={14} h={13} crisp>
          <path d="M0 0h14v13H0zM2 2v9h1V2zM5 2v6h7V2zM5 10v1h7v-1zM8 3h3v3H8z" fill="#fbe5de" fillRule="evenodd" />
        </Svg>
      </div>
      <Svg w={14} h={13} className="ml-[12px]" crisp>
        <path d="M0 0h6v5H0zM8 0h6v5H8zM0 8h6v5H0zM8 8h6v5H8z" fill="#fbe5de" />
      </Svg>
      <Svg w={13} h={13} className="ml-[24px]">
        <path d="M.5 1h4.500l1.500 1L8 1h4.500v9.500H8l-1.500 1.500L5 10.500H.5zM6.500 2v10M2 3.500h3M2 5.500h3M2 7.500h3M8 3.500h3M8 5.500h3M8 7.500h3" stroke="#fbe5de" />
      </Svg>
      <Svg w={13} h={13} className="ml-[25px]" crisp>
        <path d="M0 1.500h13M0 .5h13M2.500 2v5.500h8V2M4 4.500h5M6.500 8v4M3 11.500h7" stroke="#fbe5de" />
      </Svg>
      <Svg w={6} h={2} className="ml-[18px]" crisp>
        <path d="M0 0h6v2H0z" fill="#fff" />
      </Svg>
      <Svg w={100} h={12} className="ml-[4px]" crisp>
        <path d="M0 5.500h100M50.500 3v5" stroke="#fff" />
        <path d="M13 0h4v12h-4z" fill="#fff" />
      </Svg>
      <Svg w={8} h={8} className="ml-[4px]" crisp>
        <path d="M0 3h8v2H0zM3 0h2v8H3z" fill="#fff" />
      </Svg>
      <Fit className="ml-[15px] w-[24px]">33 %</Fit>
      <Svg w={13} h={13} className="ml-[14px]">
        <path d="M.5.5h12v12H.5z" stroke="#fff" strokeDasharray="3 .8" />
        <path d="M6.500 2v3M6.500 8v3M2 6.500h3M8 6.500h3M5.500 3l1-1 1 1M5.500 10l1 1 1-1M3 5.500l-1 1 1 1M10 5.500l1 1-1 1" stroke="#fff" />
      </Svg>
    </div>
  );
}

/* ---------- taskbar ---------- */

function Taskbar() {
  return (
    <div className="flex h-[40px] bg-[#02050a] text-white">
      <div className="flex w-[48px] shrink-0 items-center justify-center">
        <Svg w={16} h={16}>
          <path d="M0 2.200l6.500-.9v6.200H0zM7.500 1.100L16 0v7.500H7.500zM0 8.500h6.500v6.200L0 13.800zM7.500 8.500H16V16l-8.500-1.100z" fill="#fff" />
        </Svg>
      </div>
      <div className="flex w-[344px] shrink-0 items-center bg-[#333] pl-[12px] text-[14px] text-[#9a9a9a]">
        <Fit className="w-[208px]">Buscar en la web y en Windows</Fit>
      </div>
      <div className="flex items-center pl-[14px]">
        <Svg w={20} h={14} crisp>
          <path d="M4.500.5h11v13h-11zM3 2.500H.5v9H3M17 2.500h2.500v9H17" stroke="#fff" />
        </Svg>
        <Svg w={21} h={25} className="ml-[29px]">
          <path d="M5 6c0-7 7-7 8 0M8 6c0-5 5-6 6-.5" stroke="#fff" strokeWidth="1.2" />
          <path d="M0 6l21 0v17l-5 1.500L0 22z" fill="#fff" />
          <path d="M3 11.500l5-.7v4H3zM9 10.700l6-.8v4.900H9zM3 15.800h5v4l-5-.7zM9 15.800h6v4.900l-6-.8z" fill="#02050a" />
        </Svg>
        <Svg w={20} h={22} className="ml-[29px]">
          <path d="M0 10C1 3.500 5 0 10.500 0 16 0 20 4 20 9.500V12.500H6.500C6.800 16.500 10 18 13 18c2.200 0 4-.6 5.700-1.600v4.300C17 21.600 14.500 22 12 22 5.500 22 2 18 2 13c0-3 1.700-5.700 5-7-2.700 0-5.300 1.500-7 4z" fill="#0a78d7" />
          <path d="M6.700 8.700h7.300c0-2.700-1.500-4-3.500-4-2.100 0-3.500 1.700-3.800 4z" fill="#02050a" />
        </Svg>
        <Svg w={22} h={20} className="ml-[28px]">
          <path d="M0 1h8l2 2h12v15H0z" fill="#f5cf62" />
          <path d="M0 4h22v14H0z" fill="#fce79b" />
          <path d="M4 11h14v8h-3v-4H7v4H4z" fill="#37b5e9" />
        </Svg>
        <Svg w={23} h={23} className="ml-[26px]">
          <circle cx="11.5" cy="11.5" r="11" fill="#e66000" />
          <circle cx="12.5" cy="9.5" r="8.5" fill="#1b75bc" />
          <path d="M10 2c4-1 7 1 8 4l-4 1-3-2z" fill="#6fc6ee" />
          <path d="M1.500 5l4 1.500C8 4 9 6 12 7l-4 4c1 5 7 5 10 1-1 6-6 8-10 7C2 18 0 12 1.500 5z" fill="#f07d16" />
          <path d="M19 3c3 3 4 7 3 11-2 6-7 8-12 7 7 0 12-7 9-18z" fill="#ffc52e" />
        </Svg>
        <div className="ml-[18px] flex h-[40px] w-[40px] shrink-0 items-center justify-center border-b-2 border-[#76b9ed] pr-px pt-[2px]">
          <Logo size={22} letter="W" color="#2b579a" word />
        </div>
        <div className="ml-[5px] flex h-[40px] w-[48px] shrink-0 items-center justify-center border-b-2 border-[#76b9ed] bg-[#34373b] pt-[2px]">
          <Logo size={22} letter="P" color="#d24726" />
        </div>
      </div>
      <div className="ml-auto flex w-[234px] shrink-0 items-center">
        <Svg w={12} h={7}>
          <path d="M.7 6.300L6 1l5.300 5.300" stroke="#fff" strokeWidth="1.3" />
        </Svg>
        <Svg w={15} h={9} className="ml-[11px]" crisp>
          <path d="M.5.5h12v8H.5zM13.500 2.500v4" stroke="#fff" />
          <path d="M2 2h6v5H2z" fill="#fff" />
        </Svg>
        <Svg w={16} h={15} className="ml-[8px]">
          <path d="M2.500 0v5M0 2.500h5M.8.8l3.400 3.400M4.200.8L.8 4.200" stroke="#fff" strokeWidth=".8" />
          <path d="M4 14C4 8 8 4 15 4M7 14c0-4 3-7 8-7M10 14c0-3 2-4 5-4" stroke="#888" strokeWidth="1.2" />
          <path d="M12 12h3v3h-3z" fill="#aaa" />
        </Svg>
        <Svg w={17} h={14} className="ml-[8px]">
          <path d="M.5 4.500h3L7 1v12L3.500 9.500h-3zM9 4.500c1.500 1.500 1.500 3.500 0 5M11.500 2.500c2.500 2.500 2.500 6.500 0 9M14 1c3 3 3 9 0 12" stroke="#fff" />
        </Svg>
        <Svg w={16} h={16} className="ml-[7px]">
          <path d="M.7.700h14.600v11H10L8 14.500 6 11.700H.7zM3.500 3.500h9M3.500 6h9M3.500 8.500h6" stroke="#fff" strokeWidth="1.2" />
        </Svg>
        <Fit className="ml-[12px] w-[19px] text-[12px]">ESP</Fit>
        <div className="ml-[19px] mt-[-3px] flex flex-col text-[12px] leading-[17px]">
          <Fit className="ml-[1px] w-[57px]">08:27 a. m.</Fit>
          <Fit className="w-[59px]">24/05/2016</Fit>
        </div>
        <div className="ml-auto mr-[4px] h-[40px] w-px bg-[#555]" />
      </div>
    </div>
  );
}

export default function App() {
  return (
    <div className="h-[768px] w-[1366px] overflow-hidden bg-white font-['Noto_Sans',sans-serif]">
      <TitleBar />
      <Tabs />
      <Ribbon />
      <Workspace />
      <StatusBar />
      <Taskbar />
    </div>
  );
}
